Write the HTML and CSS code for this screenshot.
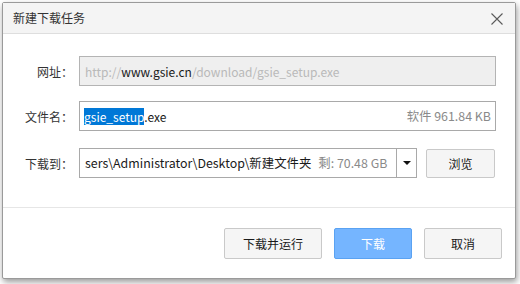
FILE: index.html
```html
<!DOCTYPE html>
<html lang="zh-CN">
<head>
<meta charset="utf-8">
<title>新建下载任务</title>
<link rel="stylesheet" href="styles.css">
</head>
<body>
<div class="dialog">
  <div class="titlebar">
    <span class="title">新建下载任务</span>
    <svg class="close" width="12" height="12" viewBox="0 0 12 12"><path d="M0.5 0.5 L11.5 11.5 M11.5 0.5 L0.5 11.5" stroke="#5a5a5a" stroke-width="1.1" fill="none"/></svg>
  </div>
  <div class="form">
    <div class="row row-url">
      <label class="label">网址：</label>
      <div class="field field-disabled"><span class="muted">http://</span><span class="host">www.gsie.cn</span><span class="muted">/download/gsie_setup.exe</span></div>
    </div>
    <div class="row row-name">
      <label class="label">文件名：</label>
      <div class="field field-split"><span class="value"><span class="sel">gsie_setup</span>.exe</span><span class="info">软件 961.84 KB</span></div>
    </div>
    <div class="row row-path">
      <label class="label">下载到：</label>
      <div class="combo">
        <div class="combo-text"><span class="value">sers\Administrator\Desktop\新建文件夹</span><span class="free">剩: 70.48 GB</span></div>
        <div class="combo-btn"><span class="arrow"></span></div>
      </div>
      <button class="btn btn-browse">浏览</button>
    </div>
  </div>
  <div class="footer">
    <button class="btn btn-wide">下载并运行</button>
    <button class="btn btn-primary">下载</button>
    <button class="btn">取消</button>
  </div>
</div>
</body>
</html>
```

FILE: styles.css
```css
* { box-sizing: border-box; }
html, body { margin: 0; padding: 0; }
body {
  width: 520px;
  height: 284px;
  background: #ffffff;
  padding: 2px 0 0 2px;
  font-family: "Noto Sans CJK SC", "Noto Sans", sans-serif;
  font-size: 12px;
  color: #333;
  overflow: hidden;
}
.dialog {
  width: 514px;
  height: 277px;
  background: #fff;
  border: 1px solid #9a9a9a;
  border-radius: 2px;
  box-shadow: 1px 3px 6px rgba(0,0,0,0.4);
  display: flex;
  flex-direction: column;
}
.titlebar {
  height: 31px;
  background: #f4f4f4;
  border-bottom: 1px solid #dedede;
  display: flex;
  align-items: center;
  justify-content: space-between;
  padding: 0 12px 0 10px;
  flex: none;
}
.title { font-size: 12px; color: #333; line-height: 1; }
.close { display: block; margin-top: 1px; }
.form {
  padding: 22px 19px 0 0;
  height: 174px;
  border-bottom: 1px solid #e6e6e6;
  flex: none;
}
.row {
  display: flex;
  align-items: center;
  height: 30px;
}
.row-name { margin-top: 15px; }
.row-path { margin-top: 17px; }
.label {
  width: 76px;
  padding-right: 6px;
  text-align: right;
  color: #333;
  flex: none;
}
.field {
  flex: 1;
  height: 30px;
  border: 1px solid #a9a9a9;
  display: flex;
  align-items: center;
  padding: 0 4px 0 5px;
  white-space: nowrap;
  overflow: hidden;
  color: #1a1a1a;
  font-size: 12px;
}
.field-disabled { background: #efefef; border-color: #b4b4b4; }
.muted { color: #b9b9b9; }
.host { color: #1a1a1a; }
.field-split { justify-content: space-between; padding-left: 4px; }
.sel { background: #0078d7; color: #fff; }
.info { color: #8a8a8a; font-size: 12.4px; }
.combo {
  width: 338px;
  height: 30px;
  border: 1px solid #a9a9a9;
  display: flex;
  flex: none;
}
.combo-text {
  flex: 1;
  display: flex;
  align-items: center;
  gap: 7px;
  padding-left: 5px;
  white-space: nowrap;
  overflow: hidden;
  color: #1a1a1a;
  font-size: 12.4px;
}
.free { color: #8a8a8a; }
.combo-btn {
  width: 20px;
  border-left: 1px solid #a9a9a9;
  display: flex;
  align-items: center;
  justify-content: center;
  flex: none;
}
.arrow {
  width: 0;
  height: 0;
  border-left: 4px solid transparent;
  border-right: 4px solid transparent;
  border-top: 4px solid #111;
}
.btn {
  font-family: inherit;
  font-size: 12px;
  color: #1a1a1a;
  width: 78px;
  height: 31px;
  background: #f5f5f5;
  border: 1px solid #c9c9c9;
  border-radius: 2px;
  padding: 0;
  flex: none;
}
.btn-browse { width: 69px; height: 29px; margin-left: 9px; }
.btn-wide { width: 98px; }
.btn-primary {
  background: #75b5ff;
  border-color: #5aa2f2;
  color: #fff;
}
.footer {
  display: flex;
  justify-content: flex-end;
  gap: 12px;
  padding: 20px 13px 0 0;
}
```
